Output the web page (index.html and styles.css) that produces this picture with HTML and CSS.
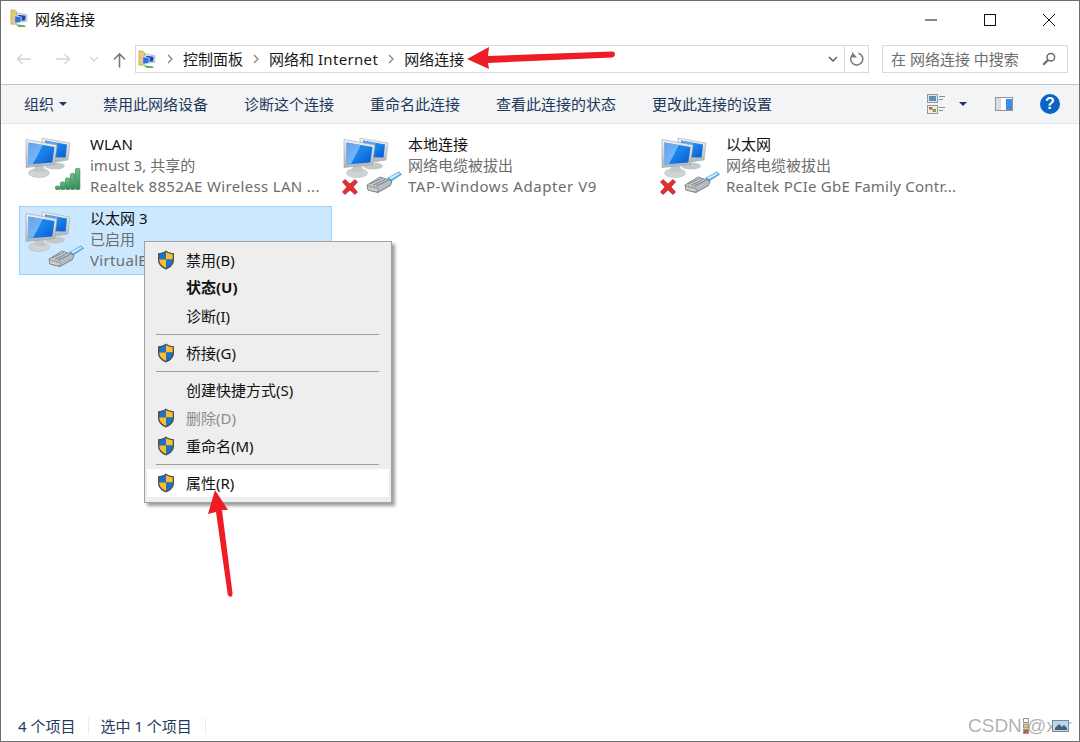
FILE: index.html
```html
<!DOCTYPE html>
<html lang="zh-CN">
<head>
<meta charset="utf-8">
<title>网络连接</title>
<link rel="stylesheet" href="styles.css">
</head>
<body>
<svg class="defs" aria-hidden="true">
  <defs>
    <linearGradient id="scr" x1="0" y1="0" x2="1" y2="1"><stop offset="0" stop-color="#0b4fd0"/><stop offset=".45" stop-color="#1a86ee"/><stop offset="1" stop-color="#0a58cf"/></linearGradient>
    <linearGradient id="frm" x1="0" y1="0" x2="0" y2="1"><stop offset="0" stop-color="#f1f4f6"/><stop offset="1" stop-color="#aeb6ba"/></linearGradient>
    <linearGradient id="bar" x1="0" y1="0" x2="0" y2="1"><stop offset="0" stop-color="#6fc08a"/><stop offset="1" stop-color="#2f8a50"/></linearGradient>
    <linearGradient id="plugg" x1="0" y1="0" x2="1" y2="1"><stop offset="0" stop-color="#e8ecef"/><stop offset="1" stop-color="#97a2a9"/></linearGradient>
    <symbol id="monitors" viewBox="0 0 50 50">
      <ellipse cx="33" cy="31" rx="10" ry="3.500" fill="#c3c8ca"/>
      <path d="M20 3 48 8 46 25 33 27 20 25Z" fill="url(#frm)" stroke="#a4abaf" stroke-width=".6"/>
      <path d="M23 5.500 45 9.500 43.500 22.500 23 22Z" fill="url(#scr)"/>
      <path d="M23 5.500 36 8 28 22 23 22Z" fill="#9bd0fb" opacity=".55"/>
      <ellipse cx="17" cy="38" rx="10.500" ry="4.500" fill="#d0d4d6" stroke="#aeb3b6" stroke-width=".5"/>
      <path d="M13 31h9l1.500 6h-12z" fill="#c2c8cb"/>
      <path d="M4 4.500 35 10 32.500 29.500 4 32.500Z" fill="url(#frm)" stroke="#9aa2a7" stroke-width=".6"/>
      <path d="M6.500 7.500 32.500 12 30.300 27.500 6.500 29.500Z" fill="url(#scr)"/>
      <path d="M6.500 7.500 21 10 11 29 6.500 29.500Z" fill="#a8d6fb" opacity=".6"/>
    </symbol>
    <symbol id="wifi" viewBox="0 0 26 22">
      <g fill="url(#bar)" stroke="#2f7d4b" stroke-width=".6">
        <rect x=".5" y="18" width="4.400" height="3.500" rx="1"/>
        <rect x="5.500" y="14" width="4.400" height="7.500" rx="1"/>
        <rect x="10.500" y="10" width="4.400" height="11.500" rx="1"/>
        <rect x="15.500" y="5.500" width="4.400" height="16" rx="1"/>
        <rect x="20.500" y=".5" width="4.400" height="21" rx="1"/>
      </g>
    </symbol>
    <symbol id="plugicon" viewBox="0 0 36 22">
      <path d="M21 7 33 .5 36 3.500 25 10.500Z" fill="#4ea6e2"/>
      <path d="M23 6.500 33 1.500 34 3 25 8.500Z" fill="#cfe9fa"/>
      <path d="M1 14 14 6 26 10 24.500 14.500 12 21.500 2 19Z" fill="url(#plugg)" stroke="#66727a" stroke-width=".8"/>
      <path d="M4 13 16 7.500M7 14 19 8.500M10 15 22 9.500" stroke="#6b777f" stroke-width=".8" fill="none"/>
      <path d="M13 8 4 13.500M17 9.500 8 15M21 10.500 11 16" stroke="#8a959c" stroke-width=".6" fill="none"/>
      <path d="M1.500 14.500 12 17.500 12 21.200 2 19Z" fill="#cfd5d9" stroke="#66727a" stroke-width=".6"/>
      <path d="M4 16.500 10 18.200" stroke="#c9a93e" stroke-width="1.500" stroke-dasharray="1 1" fill="none"/>
    </symbol>
    <symbol id="redx" viewBox="0 0 18 18">
      <path d="M1.500 4 4 1.500 9 6 14 1.500 16.500 4 12 9 16.500 14 14 16.500 9 12 4 16.500 1.500 14 6 9Z" fill="#df3036" stroke="#b51f24" stroke-width=".7" stroke-linejoin="round"/>
    </symbol>
    <symbol id="shield" viewBox="0 0 18 20">
      <path d="M9 .5C6.500 2.500 4 3 1 3.200V10c0 4.500 3.500 7.700 8 9.500 4.500-1.800 8-5 8-9.500V3.200C14 3 11.500 2.500 9 .5Z" fill="#4a4f52"/>
      <path d="M9 2v7.500H2.300V4.300C4.800 4 7 3.500 9 2Z" fill="#1b74c9"/>
      <path d="M9 2c2 1.500 4.200 2 6.700 2.300v5.200H9Z" fill="#f9bf2e"/>
      <path d="M2.300 9.500H9v8.500C5.300 16.300 2.500 13.700 2.300 10Z" fill="#f9bf2e"/>
      <path d="M9 9.500h6.700V10c-.2 3.700-3 6.300-6.700 8Z" fill="#1b74c9"/>
    </symbol>
    <symbol id="netfolder" viewBox="0 0 20 20">
      <path d="M1 1h4l2 2v13H1Z" fill="#e9c96e" stroke="#b8984a" stroke-width=".6"/>
      <path d="M7 4 18 6 17.500 13 7 14Z" fill="#e4e8ea" stroke="#7f8a90" stroke-width=".5"/>
      <path d="M8.500 6 16.500 7.200 16 12 8.500 12.500Z" fill="#1448b8"/>
      <path d="M5 7 12 8.500 11.500 14 5 15Z" fill="#2f6fe0" stroke="#dfe4e8" stroke-width=".8"/>
      <path d="M6 16 15 17 17 19 9 19Z" fill="#54b45f"/>
    </symbol>
  </defs>
</svg>

<div class="window">
  <header class="titlebar">
    <div class="title-left">
      <svg class="ico-18"><use href="#netfolder"/></svg>
      <span>网络连接</span>
    </div>
    <div class="winbtns">
      <svg class="winbtn" viewBox="0 0 14 14"><path d="M1 7h12" stroke="#111" stroke-width="1" fill="none"/></svg>
      <svg class="winbtn" viewBox="0 0 14 14"><rect x="1.500" y="1.500" width="11" height="11" stroke="#111" fill="none"/></svg>
      <svg class="winbtn" viewBox="0 0 14 14"><path d="M1 1 13 13M13 1 1 13" stroke="#111" fill="none"/></svg>
    </div>
  </header>

  <nav class="navbar">
    <div class="navbtns">
      <svg class="nav-arrow" viewBox="0 0 16 12"><path d="M15 6H1.500M6.500 1 1.500 6l5 5" stroke="#d3d3d3" stroke-width="1.300" fill="none"/></svg>
      <svg class="nav-arrow" viewBox="0 0 16 12"><path d="M1 6h13.500M9.500 1l5 5-5 5" stroke="#d3d3d3" stroke-width="1.300" fill="none"/></svg>
      <svg class="nav-chev" viewBox="0 0 10 6"><path d="M1 1 5 5 9 1" stroke="#d3d3d3" stroke-width="1.300" fill="none"/></svg>
      <svg class="nav-up" viewBox="0 0 14 16"><path d="M7 16V1.500M1 7.500l6-6 6 6" stroke="#777" stroke-width="1.700" fill="none"/></svg>
    </div>
    <div class="address">
      <svg class="ico-18 addr-ico"><use href="#netfolder"/></svg>
      <svg class="crumb-sep" viewBox="0 0 6 10"><path d="M1 1 5 5 1 9" stroke="#858585" stroke-width="1.300" fill="none"/></svg>
      <span class="crumb">控制面板</span>
      <svg class="crumb-sep" viewBox="0 0 6 10"><path d="M1 1 5 5 1 9" stroke="#858585" stroke-width="1.300" fill="none"/></svg>
      <span class="crumb">网络和 <span class="lt">Internet</span></span>
      <svg class="crumb-sep" viewBox="0 0 6 10"><path d="M1 1 5 5 1 9" stroke="#858585" stroke-width="1.300" fill="none"/></svg>
      <span class="crumb">网络连接</span>
      <svg class="addr-chev" viewBox="0 0 10 6"><path d="M1 1 5 5 9 1" stroke="#555" stroke-width="1.400" fill="none"/></svg>
      <div class="refresh">
        <svg class="refresh-ico" viewBox="0 0 14 14"><path d="M8.500 1.300A6 6 0 1 1 2.500 2.800" stroke="#777" stroke-width="1.500" fill="none"/><path d="M2 0V5.500H7.200Z" fill="#777"/></svg>
      </div>
    </div>
    <div class="search">
      <span>在 网络连接 中搜索</span>
      <svg class="search-ico" viewBox="0 0 14 14"><circle cx="8.800" cy="5.200" r="3.800" stroke="#6d6d6d" stroke-width="1.500" fill="none"/><path d="M6 8 1.200 12.800" stroke="#6d6d6d" stroke-width="2.200"/></svg>
    </div>
  </nav>

  <div class="toolbar">
    <div class="tb-left">
      <span class="tb-item">组织<i class="caret"></i></span>
      <span class="tb-item">禁用此网络设备</span>
      <span class="tb-item">诊断这个连接</span>
      <span class="tb-item">重命名此连接</span>
      <span class="tb-item">查看此连接的状态</span>
      <span class="tb-item">更改此连接的设置</span>
    </div>
    <div class="tb-right">
      <svg class="tb-view" viewBox="0 0 20 20">
        <rect x=".5" y=".5" width="10" height="8" fill="#dfe8ee" stroke="#8f9aa2"/><rect x="2" y="2" width="7" height="5" fill="#5d8fb0"/>
        <rect x=".5" y="11.500" width="10" height="8" fill="#f1efe4" stroke="#8f9aa2"/><rect x="2" y="13" width="3.500" height="2.500" fill="#c65b3a"/><rect x="5.500" y="15" width="3.500" height="3" fill="#7ea44f"/>
        <path d="M12 2.500h6M12 5.500h4M12 13.500h6M12 16.500h4" stroke="#8a8f94"/>
      </svg>
      <i class="caret caret-view"></i>
      <svg class="tb-pane" viewBox="0 0 18 14"><rect x=".5" y=".5" width="17" height="13" fill="#fff" stroke="#8f979d"/><rect x="1" y="1" width="5" height="12" fill="#d9dcde"/><rect x="11" y="2" width="6" height="11" fill="#3c8fe0"/></svg>
      <span class="help">?</span>
    </div>
  </div>

  <main class="content">
    <div class="item">
      <div class="item-icon"><svg class="mon"><use href="#monitors"/></svg><svg class="wifi"><use href="#wifi"/></svg></div>
      <div class="item-text"><div class="name">WLAN</div><div class="sub">imust 3, 共享的</div><div class="sub lt">Realtek 8852AE Wireless LAN ...</div></div>
    </div>
    <div class="item">
      <div class="item-icon"><svg class="mon"><use href="#monitors"/></svg><svg class="redx"><use href="#redx"/></svg><svg class="plug"><use href="#plugicon"/></svg></div>
      <div class="item-text"><div class="name">本地连接</div><div class="sub">网络电缆被拔出</div><div class="sub lt-wide">TAP-Windows Adapter V9</div></div>
    </div>
    <div class="item">
      <div class="item-icon"><svg class="mon"><use href="#monitors"/></svg><svg class="redx"><use href="#redx"/></svg><svg class="plug"><use href="#plugicon"/></svg></div>
      <div class="item-text"><div class="name">以太网</div><div class="sub">网络电缆被拔出</div><div class="sub lt-narrow">Realtek PCIe GbE Family Contr...</div></div>
    </div>
    <div class="item selected">
      <div class="item-icon"><svg class="mon"><use href="#monitors"/></svg><svg class="plug"><use href="#plugicon"/></svg></div>
      <div class="item-text"><div class="name">以太网 3</div><div class="sub">已启用</div><div class="sub lt">VirtualBox Host-Only Ethernet ...</div></div>
    </div>
  </main>

  <footer class="statusbar">
    <span class="st-cell">4 个项目</span>
    <span class="st-cell">选中 1 个项目</span>
  </footer>
</div>

<ul class="menu">
  <li class="mi"><svg class="shield"><use href="#shield"/></svg>禁用(B)</li>
  <li class="mi bold">状态(U)</li>
  <li class="mi">诊断(I)</li>
  <li class="msep"></li>
  <li class="mi"><svg class="shield"><use href="#shield"/></svg>桥接(G)</li>
  <li class="msep"></li>
  <li class="mi">创建快捷方式(S)</li>
  <li class="mi disabled"><svg class="shield"><use href="#shield"/></svg>删除(D)</li>
  <li class="mi"><svg class="shield"><use href="#shield"/></svg>重命名(M)</li>
  <li class="msep"></li>
  <li class="mi hover"><svg class="shield"><use href="#shield"/></svg>属性(R)</li>
</ul>

<svg class="overlay" viewBox="0 0 1080 742">
  <path d="M467 59 489 47 488 56 612 51.500C616 51.500 616 57 612 57.500L488 63 489 69Z" fill="#ee1c25"/>
  <path d="M215 490 228 510 222 510 232.500 593C233 598 228 598 227.500 593L216 512 208 514Z" fill="#ee1c25"/>
</svg>

<div class="watermark">CSDN @xxr</div>
<div class="st-icons">
  <svg class="st-det" viewBox="0 0 6 16"><rect x=".5" y=".5" width="5" height="4" fill="#fff" stroke="#8f979d"/><rect x=".5" y="6" width="5" height="4" fill="#e6c34d" stroke="#8f979d"/><rect x=".5" y="11.500" width="5" height="4" fill="#c65b3a" stroke="#8f979d"/></svg>
  <svg class="st-lg" viewBox="0 0 17 12"><rect x=".5" y=".5" width="16" height="11" fill="#bcd8ea" stroke="#6f8ca0"/><path d="M3 8l4-4 3 3 2-2 3 3v2H3Z" fill="#46606f"/></svg>
</div>
</body>
</html>
```

FILE: styles.css
```css
* { box-sizing: border-box; }
html, body { margin: 0; padding: 0; height: 742px; overflow: hidden; background: #fff; }
body {
  position: relative;
  font-family: "Noto Sans", "Noto Sans CJK SC", sans-serif;
  font-size: 15px;
  color: #111;
}
.defs { position: absolute; width: 0; height: 0; overflow: hidden; }
.lt { letter-spacing: .33px; }
.lt-wide { letter-spacing: .55px; }
.lt-narrow { letter-spacing: .23px; }

.window {
  height: 742px;
  display: flex;
  flex-direction: column;
  border: 1px solid #6e6e6e;
  background: #fff;
}

/* title bar */
.titlebar {
  flex: 0 0 37px;
  display: flex;
  align-items: center;
  justify-content: space-between;
  padding: 0 0 2px 9px;
}
.title-left { display: flex; align-items: center; gap: 6px; line-height: 20px; }
.ico-18 { width: 19px; height: 19px; flex: none; }
.winbtns { display: flex; padding: 2px 23px 0 0; gap: 45px; }
.winbtn { width: 14px; height: 14px; display: block; }

/* navigation */
.navbar {
  flex: 0 0 47px;
  display: flex;
  align-items: flex-start;
  padding: 7px 12px 0 15px;
  border-bottom: 1px solid #c4c4c4;
}
.navbtns { flex: none; width: 119px; height: 28px; display: flex; align-items: center; }
.nav-arrow { width: 16px; height: 12px; margin-right: 23px; }
.nav-chev { width: 10px; height: 6px; margin-left: -5px; margin-right: 14px; }
.nav-up { width: 13px; height: 16px; margin-top: 2px; }
.address {
  flex: none;
  width: 734px;
  height: 28px;
  display: flex;
  align-items: center;
  border: 1px solid #d9d9d9;
  padding-left: 2px;
}
.crumb-sep { width: 6px; height: 10px; margin: 0 10px 0 10px; flex: none; }
.crumb { line-height: 20px; color: #1a1a1a; white-space: nowrap; }
.addr-chev { width: 10px; height: 6px; margin-left: auto; margin-right: 6px; flex: none; }
.refresh {
  flex: none;
  width: 24px;
  height: 26px;
  border-left: 1px solid #d9d9d9;
  display: flex;
  align-items: center;
  justify-content: center;
}
.refresh-ico { width: 14px; height: 14px; }
.search {
  flex: none;
  width: 186px;
  height: 28px;
  margin-left: 13px;
  border: 1px solid #d9d9d9;
  display: flex;
  align-items: center;
  justify-content: space-between;
  padding: 0 11px 0 8px;
  color: #6d6d6d;
  line-height: 20px;
}
.search-ico { width: 14px; height: 14px; }

/* command bar */
.toolbar {
  flex: 0 0 39px;
  display: flex;
  align-items: center;
  justify-content: space-between;
  background: #f3f4f6;
  border-bottom: 1px solid #e6e8eb;
  padding: 0 19px 0 23px;
  color: #1e395b;
}
.tb-left { display: flex; gap: 36px; line-height: 20px; }
.tb-item { display: inline-flex; align-items: center; }
.caret {
  width: 0;
  height: 0;
  margin-left: 5px;
  border-left: 4px solid transparent;
  border-right: 4px solid transparent;
  border-top: 4px solid #1e395b;
}
.tb-right { display: flex; align-items: center; }
.tb-view { width: 20px; height: 20px; }
.caret-view { margin-left: 12px; margin-right: 28px; }
.tb-pane { width: 18px; height: 14px; margin-right: 27px; }
.help {
  width: 20px;
  height: 20px;
  border-radius: 50%;
  background: #0b63c4;
  color: #fff;
  font-family: "Liberation Sans", sans-serif;
  font-weight: 700;
  font-size: 16px;
  line-height: 20px;
  text-align: center;
}

/* content */
.content {
  flex: 1;
  display: grid;
  grid-template-columns: repeat(3, 313px);
  grid-auto-rows: 69px;
  column-gap: 5px;
  row-gap: 5px;
  padding: 8px 0 0 18px;
  align-content: start;
}
.item {
  display: flex;
  align-items: center;
  border: 1px solid transparent;
}
.item.selected { background: #cce8ff; border-color: #99d1ff; }
.item-icon { position: relative; flex: none; width: 70px; height: 66px; }
.mon { position: absolute; left: 2px; top: 1px; width: 50px; height: 50px; }
.wifi { position: absolute; left: 35px; top: 34px; width: 26px; height: 22px; }
.plug { position: absolute; left: 28px; top: 37px; width: 36px; height: 22px; }
.redx { position: absolute; left: 3px; top: 44px; width: 18px; height: 18px; }
.item-text { line-height: 21px; white-space: nowrap; overflow: hidden; padding-bottom: 2px; }
.name { color: #111; }
.sub { color: #6d6d6d; }

/* status bar */
.statusbar {
  flex: 0 0 28px;
  display: flex;
  align-items: center;
  padding: 0 0 3px 17px;
  color: #1e395b;
  line-height: 16px;
}
.st-cell { padding-right: 13px; margin-right: 11px; border-right: 1px solid #eaeaea; }

/* context menu */
.menu {
  position: absolute;
  left: 144px;
  top: 241px;
  width: 248px;
  height: 262px;
  margin: 0;
  padding: 4px 2px;
  list-style: none;
  background: #eeeeee;
  border: 1px solid #a0a0a0;
  box-shadow: 3px 3px 3px rgba(0, 0, 0, .38);
  color: #111;
}
.mi {
  position: relative;
  height: 28px;
  line-height: 28px;
  padding-left: 39px;
  white-space: nowrap;
}
.mi.bold { font-weight: 700; line-height: 27px; }
.mi.disabled { color: #8c8c8c; }
.mi.hover { background: #fff; }
.shield { position: absolute; left: 10px; top: 4px; width: 18px; height: 20px; }
.msep { height: 1px; margin: 4px 10px 4px 9px; background: #a0a0a0; }

/* annotations */
.overlay { position: absolute; left: 0; top: 0; width: 1080px; height: 742px; pointer-events: none; }
.watermark {
  position: absolute;
  left: 968px;
  top: 714px;
  font-family: "Liberation Sans", sans-serif;
  font-size: 19px;
  line-height: 24px;
  color: rgba(110, 110, 110, .55);
  white-space: nowrap;
}
.st-icons { position: absolute; left: 1023px; top: 718px; display: flex; align-items: center; gap: 23px; }
.st-det { width: 6px; height: 16px; }
.st-lg { width: 17px; height: 12px; }
```
